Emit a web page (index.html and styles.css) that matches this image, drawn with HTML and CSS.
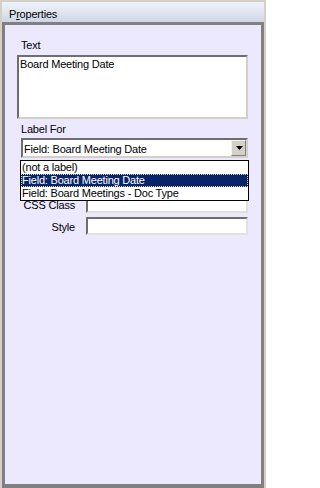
FILE: index.html
```html
<!DOCTYPE html>
<html>
<head>
<meta charset="utf-8">
<link rel="stylesheet" href="styles.css">
</head>
<body>
<div class="panel">
  <div class="titlebar">P<span class="key">r</span>operties</div>
  <div class="content">
    <div class="label">Text</div>
    <div class="textarea">Board Meeting Date</div>
    <div class="label label-for">Label For</div>
    <div class="select">
      <div class="select-value">Field: Board Meeting Date</div>
      <div class="select-btn">
        <svg width="7" height="4" viewBox="0 0 7 4"><path d="M0 0H7L3.5 4Z" fill="#000"/></svg>
      </div>
      <div class="dropdown">
        <div class="option">(not a label)</div>
        <div class="option selected">Field: Board Meeting Date</div>
        <div class="option">Field: Board Meetings - Doc Type</div>
      </div>
    </div>
    <div class="rows">
      <div class="row-label">CSS Class</div>
      <div class="input"></div>
      <div class="row-label">Style</div>
      <div class="input"></div>
    </div>
  </div>
</div>
</body>
</html>
```
FILE: styles.css
```css
html, body {
  margin: 0;
  padding: 0;
}
body {
  width: 266px;
  height: 488px;
  overflow: hidden;
  font-family: "Liberation Sans", Arial, sans-serif;
  font-size: 11px;
  letter-spacing: -0.2px;
  color: #000;
}
.panel {
  box-sizing: border-box;
  width: 266px;
  height: 488px;
  background: #d4d0c8;
  padding: 2px 2px 0 2px;
  display: flex;
  flex-direction: column;
}
.titlebar {
  box-sizing: border-box;
  height: 20px;
  padding: 5px 0 0 7px;
  line-height: 14px;
  background: linear-gradient(#eef1f8 0%, #e2e7f1 45%, #cdd6e5 100%);
  flex: none;
}
.key {
  text-decoration: underline;
}
.content {
  flex: 1;
  background: #ece9fe;
  border: 3px solid #808080;
  border-bottom-width: 4px;
  padding: 14px 13px 0 12px;
  display: flex;
  flex-direction: column;
}
.label {
  line-height: 13px;
  padding-left: 4px;
}
.textarea {
  box-sizing: border-box;
  margin-top: 3px;
  height: 64px;
  background: #fff;
  border-top: 2px solid #6e6e6e;
  border-left: 2px solid #6e6e6e;
  border-right: 2px solid #d4d0c8;
  border-bottom: 2px solid #d4d0c8;
  padding: 1px 1px;
  line-height: 13px;
}
.label-for {
  margin-top: 4px;
}
.select {
  position: relative;
  box-sizing: border-box;
  margin: 2px 0 0 4px;
  height: 20px;
  background: #fff;
  border-top: 2px solid #6e6e6e;
  border-left: 2px solid #6e6e6e;
  border-right: 2px solid #d4d0c8;
  border-bottom: 2px solid #d4d0c8;
  display: flex;
}
.select-value {
  flex: 1;
  padding: 2px 0 0 1px;
  line-height: 14px;
}
.select-btn {
  box-sizing: border-box;
  width: 15px;
  height: 16px;
  background: #d4d0c8;
  border-top: 1px solid #f4f3f0;
  border-left: 1px solid #f4f3f0;
  border-right: 1px solid #808080;
  border-bottom: 1px solid #808080;
  display: flex;
  align-items: center;
  justify-content: center;
  padding-left: 1px;
}
.select-btn svg {
  display: block;
}
.dropdown {
  position: absolute;
  top: 20px;
  left: -3px;
  right: -3px;
  background: #fff;
  border: 1px solid #000;
  z-index: 2;
}
.option {
  height: 13px;
  line-height: 13px;
  padding-left: 1px;
  white-space: nowrap;
}
.option.selected {
  background: #0a246a;
  color: #fff;
  outline: 1px dotted #e6e2b0;
  outline-offset: -1px;
}
.rows {
  margin-top: 37px;
  display: grid;
  grid-template-columns: 58px 1fr;
  column-gap: 11px;
  row-gap: 4px;
}
.row-label {
  text-align: right;
  padding-top: 4px;
  line-height: 13px;
}
.input {
  box-sizing: border-box;
  height: 18px;
  background: #fff;
  border-top: 2px solid #6e6e6e;
  border-left: 2px solid #6e6e6e;
  border-right: 2px solid #e4e1dc;
  border-bottom: 2px solid #e4e1dc;
}
```
